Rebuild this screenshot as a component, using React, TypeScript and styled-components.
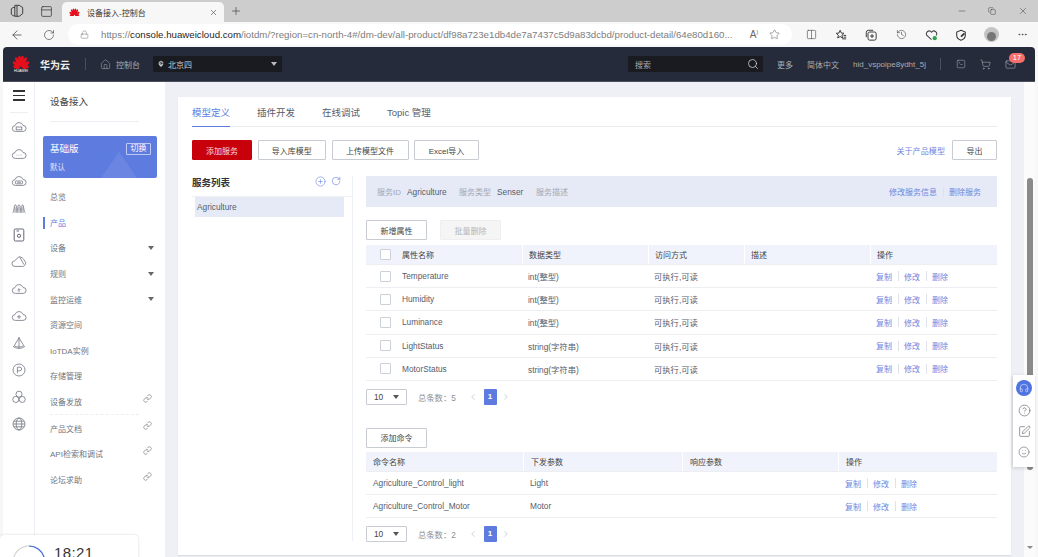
import React from 'react';
import styled, { createGlobalStyle } from 'styled-components';
import { ArrowLeft, RotateCw, Lock, Star, Columns2, Plus, X, Minus, Copy, History, PanelTop, MoreHorizontal, Search, Home, MapPin, ShoppingCart, Mail, SquareTerminal, Link as ChainIcon, ChevronLeft, ChevronRight, CirclePlus, RotateCw as Refresh, Headphones, CircleHelp, SquarePen, Smile } from 'lucide-react';

const CN = `"Liberation Sans", "Noto Sans CJK SC", sans-serif`;

const Global = createGlobalStyle`
  html, body { margin: 0; padding: 0; background: #f7f7f7; }
  * { box-sizing: border-box; }
  body { font-family: ${CN}; font-size: 8px; color: #575d6c; }
`;

const Page = styled.div`
  position: relative; width: 1038px; height: 557px; overflow: hidden;
  display: flex; flex-direction: column; background: #f7f7f7;
`;
const TabStrip = styled.div`
  height: 22px; background: #cdcdcd; display: flex; align-items: flex-end; color: #3a3a3a;
`;
const StripIcon = styled.div<{ $w: number }>`
  width: ${p => p.$w}px; height: 22px; display: flex; align-items: center; justify-content: center; flex: none;
`;
const BrowserTab = styled.div`
  width: 162px; height: 20px; margin-left: 3px; background: #f7f7f7; border-radius: 5px 5px 0 0;
  display: flex; align-items: center; padding: 0 6px 0 7px; gap: 7px; flex: none;
`;
const TabTitle = styled.span`flex: 1; font-size: 8px; color: #333;`;
const Spacer = styled.div`flex: 1;`;
const AddressRow = styled.div`
  height: 25px; display: flex; align-items: center; color: #444; background: #f7f7f7;
`;
const UrlPill = styled.div`
  width: 724px; height: 21px; margin: 0 4px; background: #fff; border-radius: 11px; flex: none;
  display: flex; align-items: center; padding: 0 12px 0 12px;
`;
const Url = styled.span`
  flex: 1; min-width: 0; margin-left: 12px; font-size: 9.7px; color: #7d7d7d; white-space: nowrap;
  b { font-weight: 400; color: #1f1f1f; }
`;
const ReadAloud = styled.span`
  width: 30px; flex: none; text-align: center; font-size: 10px; color: #666;
  sup { font-size: 6px; }
`;
const ToolIcon = styled.div<{ $w?: number }>`
  width: ${p => p.$w ?? 30}px; height: 25px; display: flex; align-items: center; justify-content: center; flex: none; position: relative;
`;
const Avatar = styled.div`
  width: 15px; height: 15px; border-radius: 50%; background: #c4c4c4; display: flex; align-items: flex-end; justify-content: center; overflow: hidden;
  &::after { content: ''; width: 9px; height: 9px; border-radius: 50%; background: #777; margin-bottom: 1px; }
`;
const AppWindow = styled.div`
  flex: 1; margin: 0 3px; min-height: 0; display: flex; flex-direction: column; border-radius: 4px 4px 0 0; overflow: hidden; background: #fff;
`;
const Header = styled.header`
  height: 35px; flex: none; background: #252b3a; border-bottom: 1px solid #4a4f5b; display: flex; align-items: center; color: #b8bac0; padding-right: 12px;
`;
const LogoBox = styled.div`
  width: 18px; margin-left: 9px; display: flex; flex-direction: column; align-items: center; flex: none;
  span { font-size: 3.6px; color: #fff; line-height: 4px; }
`;
const Brand = styled.span`margin-left: 10px; width: 45px; font-size: 10px; font-weight: 700; color: #eee;`;
const HeadSep = styled.div<{ $ml?: number; $mr?: number }>`
  width: 1px; height: 12px; background: #4a4f5b; margin: 0 ${p => p.$mr ?? 0}px 0 ${p => p.$ml ?? 0}px; flex: none;
`;
const HeadText = styled.span<{ $w: number; $ml: number }>`
  width: ${p => p.$w}px; margin-left: ${p => p.$ml}px; flex: none; font-size: 8px; color: #a8abb2; white-space: nowrap;
`;
const Region = styled.div`
  width: 129px; height: 16px; background: #191b20; border-radius: 1px; margin-left: 13px; display: flex; align-items: center; padding: 0 5px 0 4px; gap: 3px; color: #ccc; flex: none;
  span { flex: 1; font-size: 8px; }
`;
const Caret = styled.i<{ $c?: string }>`
  display: block; width: 0; height: 0; border: 3px solid transparent; border-top: 4px solid ${p => p.$c ?? '#666'}; border-bottom: 0; flex: none;
`;
const SearchBox = styled.div`
  width: 135px; height: 16px; background: #191b20; border-radius: 1px; display: flex; align-items: center; padding: 0 4px 0 7px; color: #ccc; flex: none;
  span { flex: 1; font-size: 8px; color: #a8abb2; }
`;
const HeadIcon = styled.div`
  width: 25px; display: flex; justify-content: center; flex: none; position: relative; color: #a8abb2;
`;
const Badge = styled.span`
  position: absolute; left: 11px; top: -6px; width: 16px; height: 10px; border-radius: 5px; background: #f66f6a; color: #fff; font-size: 7.5px; line-height: 10px; text-align: center;
`;
const Body = styled.div`flex: 1; min-height: 0; display: flex;`;
const Rail = styled.aside`
  width: 32px; flex: none; background: #fff; border-right: 1px solid #eceef3; display: flex; flex-direction: column; align-items: center; color: #7d818d;
`;
const Burger = styled.div`
  width: 12px; height: 30px; padding-top: 8px; display: flex; flex-direction: column; gap: 3px; flex: none;
  i { display: block; height: 1.5px; background: #333; }
`;
const RailRule = styled.div`width: 18px; height: 1px; background: #eceef3; flex: none;`;
const RailIcon = styled.div`height: 27px; display: flex; align-items: center; flex: none;`;
const SideNav = styled.nav`
  width: 130px; flex: none; background: #fff; padding: 0 8px; display: flex; flex-direction: column;
`;
const NavTitle = styled.div`
  height: 40px; margin: 0 18px 0 7px; border-bottom: 1px solid #eceef3; font-size: 9.5px; color: #444; padding-top: 14px; line-height: 12px; flex: none;
`;
const PlanCard = styled.div`
  position: relative; height: 42px; margin-top: 14px; margin-bottom: 6px; background: #5e7ce0; border-radius: 2px; color: #fff; padding: 7px 6px 0 7px; overflow: hidden; flex: none;
`;
const PlanTop = styled.div`display: flex; justify-content: space-between; align-items: center; font-size: 9.5px; line-height: 12px;`;
const PlanSwitch = styled.span`
  border: 1px solid rgba(255,255,255,.6); border-radius: 1px; font-size: 8px; line-height: 10px; padding: 0 3px; width: 25px; text-align: center;
`;
const PlanSub = styled.div`margin-top: 6px; font-size: 7.5px; opacity: .8;`;
const PlanArt = styled.svg`position: absolute; right: 20px; bottom: 0; opacity: .08;`;
const NavItem = styled.div<{ $active?: boolean }>`
  position: relative; height: 25.6px; flex: none; display: flex; align-items: center; justify-content: space-between; padding: 0 3px 0 7px;
  font-size: 8px; color: ${p => (p.$active ? '#5e7ce0' : '#70747e')};
  ${p => p.$active ? `&::before { content: ''; position: absolute; left: 0; top: 7px; width: 2px; height: 12px; background: #5e7ce0; }` : ''}
`;
const NavLinkIcon = styled(ChainIcon)`
  position: relative; top: -3px; left: -2px; color: #666;
`;
const NavRule = styled.div`height: 0; margin: 0 18px 0 7px; border-top: 1px dashed #eceef3;`;
const Main = styled.main`
  flex: 1; min-width: 0; background: #eef0f5; padding: 15px 13px 0 13px; overflow: hidden;
`;
const Card = styled.section`
  background: #fff; height: 458px; padding: 0 14px; box-shadow: 0 1px 1px rgba(0,0,0,.08);
`;
const Tabs = styled.div`
  height: 30px; border-bottom: 1px solid #e8eaee; display: flex; gap: 27px; align-items: stretch;
`;
const TabItem = styled.div<{ $active?: boolean }>`
  font-size: 9.5px; line-height: 32px; height: 30px; white-space: nowrap;
  color: ${p => (p.$active ? '#5e7ce0' : '#575d6c')};
  border-bottom: ${p => (p.$active ? '1.5px solid #5e7ce0' : '0')};
`;
const Toolbar = styled.div`display: flex; align-items: center; gap: 5.5px; margin-top: 13px;`;
const Btn = styled.button<{ $w: number; $primary?: boolean; $disabled?: boolean }>`
  width: ${p => p.$w}px; height: 20px; padding: 0; border-radius: 1px; font-family: ${CN}; font-size: 8px; flex: none;
  border: 1px solid ${p => (p.$primary ? '#c7000b' : p.$disabled ? '#efefef' : '#c8cbd2')};
  background: ${p => (p.$primary ? '#c7000b' : p.$disabled ? '#f5f5f5' : '#fff')};
  color: ${p => (p.$primary ? '#fbdcdc' : p.$disabled ? '#b5b5b5' : '#444')};
`;
const Link = styled.a`color: #6f86de; font-size: 8px; white-space: nowrap;`;
const AboutLink = styled(Link)`font-size: 8.1px; margin-right: 1.5px;`;
const ServiceArea = styled.div`display: flex; margin-top: 16px;`;
const ServiceList = styled.div`width: 161px; height: 365px; border-right: 1px solid #eef0f4; flex: none;`;
const ListHead = styled.div`
  height: 21px; border-bottom: 1px solid #eef0f4; display: flex; align-items: flex-start; padding-right: 11px; color: #5e7ce0; gap: 5px;
  strong { flex: 1; font-size: 9.5px; color: #333; line-height: 14px; }
`;
const ListItem = styled.div`
  height: 20px; margin: 0 8px 0 3px; background: #e6eaf7; padding-left: 2px; line-height: 20px; font-size: 8.3px; color: #575d6c;
`;
const ServiceDetail = styled.div`flex: 1; min-width: 0; padding-left: 13px;`;
const Strip = styled.div`
  height: 31px; background: #e6eaf6; display: flex; align-items: center; padding: 0 16px 0 11px; font-size: 8px; color: #a3a7b1;
`;
const StripVal = styled.span<{ $ml: number; $w: number }>`
  margin-left: ${p => p.$ml}px; width: ${p => p.$w}px; color: #575d6c; font-size: 8.3px; flex: none;
`;
const LinkSep = styled.i`display: block; width: 1px; height: 10px; background: #dfe2ea; margin: 0 5.5px; flex: none;`;
const BtnRow = styled.div<{ $mt: number }>`display: flex; gap: 13px; margin-top: ${p => p.$mt}px;`;
const Grid = styled.div<{ $cols: string; $head?: boolean; $h: number }>`
  display: grid; grid-template-columns: ${p => p.$cols}; height: ${p => p.$h}px; align-items: center;
  background: ${p => (p.$head ? '#f0f3fb' : '#fff')};
  border-bottom: 1px solid #eceef2;
  font-size: ${p => (p.$head ? '8px' : '8.3px')};
  color: ${p => (p.$head ? '#444' : '#575d6c')};
`;
const Table = styled.div<{ $mt: number }>`margin-top: ${p => p.$mt}px;`;
const Cell = styled.div<{ $head?: boolean; $pad?: number }>`
  padding-left: ${p => p.$pad ?? 6}px; height: 100%; display: flex; align-items: center; white-space: nowrap;
  ${p => p.$head ? 'border-left: 1px solid #fff;' : ''}
`;
const CheckCell = styled(Cell)`padding-left: 14px; gap: 11px; border-left: 0;`;
const Check = styled.i`
  display: block; width: 11px; height: 11px; background: #fff; border: 1px solid #ccd0d8; border-radius: 1px; flex: none;
`;
const Pager = styled.div<{ $mt: number }>`display: flex; align-items: center; margin-top: ${p => p.$mt}px; height: 16.5px; color: #a0a4ad;`;
const SizeSelect = styled.div`
  width: 41px; height: 100%; border: 1px solid #c8cbd2; border-radius: 1px; display: flex; align-items: center; justify-content: space-between; padding: 0 7px 0 7px; font-size: 8.3px; color: #444; flex: none;
`;
const PagerTotal = styled.span`margin-left: 11px; width: 50px; font-size: 8.3px; color: #8b8f99; white-space: nowrap; flex: none;`;
const PageNum = styled.span`
  width: 13px; height: 100%; margin: 0 4.5px 0 5.5px; background: #5e7ce0; border-radius: 1px; color: #fff; text-align: center; line-height: 16.5px; font-size: 8px; font-weight: 700; flex: none;
`;
const Scrollbar = styled.div`
  width: 11px; flex: none; background: #fbfbfb; display: flex; flex-direction: column; align-items: center; position: relative; padding-left: 1px;
`;
const Thumb = styled.div`width: 6px; height: 292px; margin-top: 96px; background: #8a8a8a; border-radius: 3px; flex: none;`;
const DownArrow = styled.i`
  position: absolute; bottom: 8px; width: 0; height: 0; border: 3px solid transparent; border-top: 3px solid #8a8a8a; border-bottom: 0;
`;
const Float = styled.div`
  position: absolute; left: 1013px; top: 375px; width: 22px; height: 92px; background: #fff; box-shadow: -1px 1px 4px rgba(0,0,0,.16);
  display: flex; flex-direction: column; align-items: center; padding-top: 5px; gap: 8px; color: #555;
`;
const FloatBlue = styled.div`
  width: 16px; height: 16px; border-radius: 50%; background: #4f73e0; color: #fff; display: flex; align-items: center; justify-content: center;
`;
const ClockCard = styled.div`
  position: absolute; left: 0; top: 535px; width: 138px; height: 30px; background: #fff; border-radius: 4px; box-shadow: 0 0 3px rgba(0,0,0,.16);
  display: flex; padding: 10px 0 0 12px; gap: 8px; align-items: flex-start;
  span { font-size: 15px; line-height: 16px; color: #333; letter-spacing: .4px; }
`;

const petals: [number, number, number][] = [
  [-78, 17, 7], [-52, 14.5, 9], [-27, 12.5, 10.5], [-8, 12, 11], [8, 12, 11], [27, 12.5, 10.5], [52, 14.5, 9], [78, 17, 7],
];
const HuaweiLogo = ({ size }: { size: number }) => (
  <svg width={size} height={size * 0.78} viewBox="0 0 36 28" fill="#e60f1c">
    {petals.map(([a, cy, ry], i) => (
      <ellipse key={i} cx="18" cy={cy} rx="3.4" ry={ry} transform={`rotate(${a} 18 26)`} />
    ))}
  </svg>
);

const CloudBase = ({ children }: { children?: React.ReactNode }) => (
  <svg width="16" height="16" viewBox="0 0 20 20" fill="none" stroke="currentColor" strokeWidth="1.1">
    <path d="M5.5 15.5a3.6 3.6 0 0 1-.5-7.2 5.2 5.2 0 0 1 10-.2 3.7 3.7 0 0 1 .3 7.4z" />
    {children}
  </svg>
);
const railIcons: React.ReactNode[] = [
  <CloudBase key="a"><rect x="6.5" y="10" width="7" height="3.5" /></CloudBase>,
  <CloudBase key="b"><path d="M7 11.5h.8M9.6 11.5h.8M12.2 11.5h.8" /></CloudBase>,
  <CloudBase key="c"><rect x="5.5" y="10" width="9" height="3.5" rx="1" /><path d="M8 11.7h4" /></CloudBase>,
  <svg key="d" width="16" height="16" viewBox="0 0 20 20" fill="none" stroke="currentColor" strokeWidth="1.1"><path d="M2 16c2 0 1.500-10 3.500-10S7 16 7.500 16 8 6 10 6s2 10 2.500 10S13 6 14.500 6 16 16 18 16M5 16V9M10 16V9M15 16V9" /></svg>,
  <svg key="e" width="16" height="16" viewBox="0 0 20 20" fill="none" stroke="#5b6070" strokeWidth="1.2"><rect x="4" y="2.500" width="12" height="15" rx="1.500" /><circle cx="10" cy="11" r="2" /><path d="M7 5h3" /></svg>,
  <svg key="f" width="16" height="16" viewBox="0 0 20 20" fill="none" stroke="currentColor" strokeWidth="1.1"><path d="M5 15.500a3.500 3.500 0 0 1-.5-7L10 3.500c3 0 6 2.500 6 3.500l2.500 4c-.5 2-1.500 4.500-4 4.500zM11 4l5 9" /></svg>,
  <CloudBase key="g"><path d="M10 14v-4M8 11.500l2-2 2 2" /></CloudBase>,
  <CloudBase key="h"><path d="M7.500 11h5M10 8.500v5" /></CloudBase>,
  <svg key="i" width="16" height="16" viewBox="0 0 20 20" fill="none" stroke="currentColor" strokeWidth="1.1"><path d="M10 2.500v15M10 3.500l-6 10c3 2 9 2 12 0zM2.500 14c3 3.500 12 3.500 15 0" /></svg>,
  <svg key="j" width="16" height="16" viewBox="0 0 20 20" fill="none" stroke="currentColor" strokeWidth="1.1"><circle cx="10" cy="10" r="7.500" /><path d="M8 14V6.500h3a2 2 0 0 1 0 4.500H8" /></svg>,
  <svg key="k" width="16" height="16" viewBox="0 0 20 20" fill="none" stroke="currentColor" strokeWidth="1.1"><circle cx="10" cy="6.500" r="3.800" /><circle cx="6" cy="13" r="3.800" /><circle cx="14" cy="13" r="3.800" /></svg>,
  <svg key="l" width="16" height="16" viewBox="0 0 20 20" fill="none" stroke="currentColor" strokeWidth="1.1"><circle cx="10" cy="10" r="7.500" /><ellipse cx="10" cy="10" rx="3.500" ry="7.500" /><path d="M2.500 10h15M3.500 6.500h13M3.500 13.500h13" /></svg>,
];

const navTop = [{ t: '总览' }, { t: '产品', active: true }, { t: '设备', caret: true }, { t: '规则', caret: true }, { t: '监控运维', caret: true }, { t: '资源空间' }, { t: 'IoTDA实例' }, { t: '存储管理' }, { t: '设备发放', link: true }];
const navBottom = ['产品文档', 'API检索和调试', '论坛求助'];
const props1 = [['Temperature', 'int(整型)'], ['Humidity', 'int(整型)'], ['Luminance', 'int(整型)'], ['LightStatus', 'string(字符串)'], ['MotorStatus', 'string(字符串)']];
const cols1 = '156px 126px 96px 126px 1fr';
const cols2 = '157px 159px 156px 1fr';

const Actions = () => (
  <>
    <Link>复制</Link><LinkSep /><Link>修改</Link><LinkSep /><Link>删除</Link>
  </>
);
const PagerRow = ({ total, mt }: { total: number; mt: number }) => (
  <Pager $mt={mt}>
    <SizeSelect>10<Caret $c="#555" /></SizeSelect>
    <PagerTotal>总条数：{total}</PagerTotal>
    <ChevronLeft size={10} strokeWidth={1.2} />
    <PageNum>1</PageNum>
    <ChevronRight size={10} strokeWidth={1.2} />
  </Pager>
);

export default function App() {
  return (
    <Page>
      <Global />
      <TabStrip>
        <StripIcon $w={33}>
          <svg width="14" height="14" viewBox="0 0 16 16" fill="none" stroke="#3a3a3a" strokeWidth="1.1"><path d="M5.500 1.500h5l4 2.500v7l-4 3h-5z" /><path d="M5.500 4h-2l-2 1.500v6l2 2h2M8 1.500v13" /></svg>
        </StripIcon>
        <StripIcon $w={26}><PanelTop size={13} strokeWidth={1.4} /></StripIcon>
        <BrowserTab>
          <HuaweiLogo size={11} />
          <TabTitle>设备接入-控制台</TabTitle>
          <X size={9} strokeWidth={1.5} />
        </BrowserTab>
        <StripIcon $w={23}><Plus size={12} strokeWidth={1.3} /></StripIcon>
        <Spacer />
        <StripIcon $w={31}><Minus size={10} strokeWidth={1.2} /></StripIcon>
        <StripIcon $w={30}><Copy size={8} strokeWidth={1.4} /></StripIcon>
        <StripIcon $w={31}><X size={10} strokeWidth={1.2} /></StripIcon>
      </TabStrip>
      <AddressRow>
        <ToolIcon $w={34}><ArrowLeft size={14} strokeWidth={1.3} /></ToolIcon>
        <ToolIcon $w={30}><RotateCw size={12} strokeWidth={1.3} /></ToolIcon>
        <UrlPill>
          <Lock size={9} strokeWidth={1.2} color="#666" />
          <Url>https://<b>console.huaweicloud.com</b>/iotdm/?region=cn-north-4#/dm-dev/all-product/df98a723e1db4de7a7437c5d9a83dcbd/product-detail/64e80d160...</Url>
          <ReadAloud>A<sup>)</sup></ReadAloud>
          <Star size={11} strokeWidth={1.1} color="#555" />
        </UrlPill>
        <ToolIcon><Columns2 size={11} strokeWidth={1.3} /></ToolIcon>
        <ToolIcon>
          <svg width="12" height="12" viewBox="0 0 14 14" fill="none" stroke="#333" strokeWidth="1.100"><path d="M6 1.500l1.400 3.200 3.100.3-2.400 2.200.7 3.300L6 8.800l-2.800 1.700.7-3.300L1.500 5l3.100-.3z" /><path d="M10 7.500h3M10 9.500h3M8.500 11.500h4.500" /></svg>
        </ToolIcon>
        <ToolIcon>
          <svg width="12" height="12" viewBox="0 0 14 14" fill="none" stroke="#333" strokeWidth="1.100"><rect x="3.500" y="3.500" width="9.500" height="9.500" rx="2" /><path d="M1.500 9.500V4A2.500 2.500 0 0 1 4 1.500h5.500M8.200 6v4.500M6 8.200h4.500" /></svg>
        </ToolIcon>
        <ToolIcon><History size={11} strokeWidth={1.3} /></ToolIcon>
        <ToolIcon>
          <svg width="13" height="12" viewBox="0 0 14 13" fill="none" stroke="#444" strokeWidth="1.100"><path d="M7 11.500 2 7a2.800 2.800 0 0 1 5-3.500A2.800 2.800 0 0 1 12 7" /><circle cx="10.500" cy="10" r="2.300" fill="#2ca44a" stroke="none" /></svg>
        </ToolIcon>
        <ToolIcon>
          <svg width="12" height="12" viewBox="0 0 14 14" fill="none" stroke="#333" strokeWidth="1.200"><path d="M7 1.500l5 2v4c0 3-2 4.500-5 5.500-3-1-5-2.500-5-5.500v-4z" /><path d="M7 9l4-4" strokeWidth="2" /></svg>
        </ToolIcon>
        <ToolIcon $w={31}><Avatar /></ToolIcon>
        <ToolIcon><MoreHorizontal size={11} strokeWidth={1.6} /></ToolIcon>
      </AddressRow>
      <AppWindow>
        <Header>
          <LogoBox><HuaweiLogo size={18} /><span>HUAWEI</span></LogoBox>
          <Brand>华为云</Brand>
          <HeadSep $mr={14} />
          <Home size={11} strokeWidth={1.2} color="#a8abb2" />
          <HeadText $ml={5} $w={24}>控制台</HeadText>
          <Region>
            <MapPin size={8} fill="#ccc" color="#191b20" />
            <span>北京四</span>
            <Caret $c="#bbb" />
          </Region>
          <Spacer />
          <SearchBox>
            <span>搜索</span>
            <Search size={12} strokeWidth={1.5} color="#ddd" />
          </SearchBox>
          <HeadText $ml={14} $w={17}>更多</HeadText>
          <HeadText $ml={13} $w={32}>简体中文</HeadText>
          <HeadText $ml={14} $w={74}>hid_vspoipe8ydht_5j</HeadText>
          <HeadSep $ml={13} $mr={7} />
          <HeadIcon><SquareTerminal size={10} strokeWidth={1.3} /></HeadIcon>
          <HeadIcon><ShoppingCart size={11} strokeWidth={1.3} /></HeadIcon>
          <HeadIcon><Mail size={11} strokeWidth={1.3} /><Badge>17</Badge></HeadIcon>
        </Header>
        <Body>
          <Rail>
            <Burger><i /><i /><i /></Burger>
            <RailRule />
            {railIcons.map((ic, i) => <RailIcon key={i}>{ic}</RailIcon>)}
          </Rail>
          <SideNav>
            <NavTitle>设备接入</NavTitle>
            <PlanCard>
              <PlanArt width="36" height="26" viewBox="0 0 36 26"><path d="M18 0 36 26H0z" fill="#fff" /></PlanArt>
              <PlanTop>基础版<PlanSwitch>切换</PlanSwitch></PlanTop>
              <PlanSub>默认</PlanSub>
            </PlanCard>
            {navTop.map(n => (
              <NavItem key={n.t} $active={n.active}>
                {n.t}
                {n.caret && <Caret />}
                {n.link && <NavLinkIcon size={9} strokeWidth={1.5} />}
              </NavItem>
            ))}
            <NavRule />
            {navBottom.map(t => (
              <NavItem key={t}>{t}<NavLinkIcon size={9} strokeWidth={1.5} /></NavItem>
            ))}
          </SideNav>
          <Main>
            <Card>
              <Tabs>
                <TabItem $active>模型定义</TabItem>
                <TabItem>插件开发</TabItem>
                <TabItem>在线调试</TabItem>
                <TabItem>Topic 管理</TabItem>
              </Tabs>
              <Toolbar>
                <Btn $w={60} $primary>添加服务</Btn>
                <Btn $w={68.5}>导入库模型</Btn>
                <Btn $w={77}>上传模型文件</Btn>
                <Btn $w={65}>Excel导入</Btn>
                <Spacer />
                <AboutLink>关于产品模型</AboutLink>
                <Btn $w={45}>导出</Btn>
              </Toolbar>
              <ServiceArea>
                <ServiceList>
                  <ListHead>
                    <strong>服务列表</strong>
                    <CirclePlus size={11} strokeWidth={1.2} />
                    <Refresh size={10} strokeWidth={1.4} />
                  </ListHead>
                  <ListItem>Agriculture</ListItem>
                </ServiceList>
                <ServiceDetail>
                  <Strip>
                    服务ID
                    <StripVal $ml={6} $w={52}>Agriculture</StripVal>
                    <span>服务类型</span>
                    <StripVal $ml={6} $w={39}>Senser</StripVal>
                    <span>服务描述</span>
                    <Spacer />
                    <Link>修改服务信息</Link><LinkSep /><Link>删除服务</Link>
                  </Strip>
                  <BtnRow $mt={13}>
                    <Btn $w={61}>新增属性</Btn>
                    <Btn $w={61} $disabled>批量删除</Btn>
                  </BtnRow>
                  <Table $mt={5}>
                    <Grid $cols={cols1} $head $h={20}>
                      <CheckCell><Check />属性名称</CheckCell>
                      <Cell $head>数据类型</Cell>
                      <Cell $head>访问方式</Cell>
                      <Cell $head>描述</Cell>
                      <Cell $head>操作</Cell>
                    </Grid>
                    {props1.map(([n, t]) => (
                      <Grid key={n} $cols={cols1} $h={23.2}>
                        <CheckCell><Check />{n}</CheckCell>
                        <Cell>{t}</Cell>
                        <Cell>可执行,可读</Cell>
                        <Cell />
                        <Cell><Actions /></Cell>
                      </Grid>
                    ))}
                  </Table>
                  <PagerRow total={5} mt={8} />
                  <BtnRow $mt={22.5}><Btn $w={61}>添加命令</Btn></BtnRow>
                  <Table $mt={4}>
                    <Grid $cols={cols2} $head $h={20}>
                      <Cell $pad={7}>命令名称</Cell>
                      <Cell $head $pad={7}>下发参数</Cell>
                      <Cell $head $pad={7}>响应参数</Cell>
                      <Cell $head $pad={7}>操作</Cell>
                    </Grid>
                    {[['Agriculture_Control_light', 'Light'], ['Agriculture_Control_Motor', 'Motor']].map(([n, p]) => (
                      <Grid key={n} $cols={cols2} $h={23.2}>
                        <Cell $pad={7}>{n}</Cell>
                        <Cell $pad={7}>{p}</Cell>
                        <Cell />
                        <Cell $pad={7}><Actions /></Cell>
                      </Grid>
                    ))}
                  </Table>
                  <PagerRow total={2} mt={7.5} />
                </ServiceDetail>
              </ServiceArea>
            </Card>
          </Main>
          <Scrollbar>
            <Thumb />
            <DownArrow />
          </Scrollbar>
        </Body>
      </AppWindow>
      <Float>
        <FloatBlue><Headphones size={10} strokeWidth={1.3} /></FloatBlue>
        <CircleHelp size={13} strokeWidth={1.1} />
        <SquarePen size={13} strokeWidth={1.1} />
        <Smile size={12} strokeWidth={1.1} />
      </Float>
      <ClockCard>
        <svg width="34" height="34" viewBox="0 0 34 34" fill="none" strokeWidth="1.2">
          <circle cx="17" cy="17" r="16" stroke="#cfcfcf" />
          <path d="M17 1a16 16 0 0 1 15 11" stroke="#3f6fe0" />
        </svg>
        <span>18:21</span>
      </ClockCard>
    </Page>
  );
}
